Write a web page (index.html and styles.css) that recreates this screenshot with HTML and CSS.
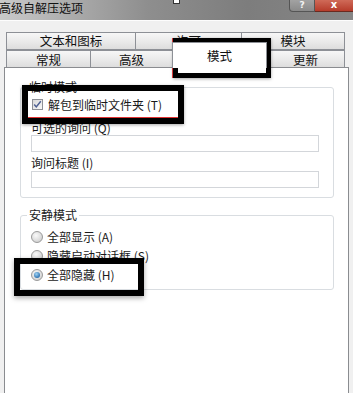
FILE: index.html
```html
<!DOCTYPE html>
<html lang="zh-CN">
<head>
<meta charset="utf-8">
<title>高级自解压选项</title>
<link rel="stylesheet" href="styles.css">
</head>
<body>
<div class="titlebar">
  <span class="title">高级自解压选项</span>
  <div class="capbtns">
    <span class="help">?</span>
    <span class="close">x</span>
  </div>
</div>
<div class="tabs">
  <div class="tabrow row1">
    <span class="tab w130">文本和图标</span>
    <span class="tab w106">许可</span>
    <span class="tab w103">模块</span>
  </div>
  <div class="tabrow row2">
    <span class="tab w85">常规</span>
    <span class="tab w82">高级</span>
    <span class="tab sel">模式</span>
    <span class="tab w78">更新</span>
  </div>
</div>
<div class="panel">
  <fieldset class="group g1">
    <legend>临时模式</legend>
    <label class="check-row"><span class="chk"><svg viewBox="0 0 11 11" width="9" height="9"><path d="M1.5 5.5 L4 8.5 L9.5 1.5" fill="none" stroke="#4d5f92" stroke-width="1.8"/></svg></span>解包到临时文件夹 (T)</label>
    <div class="lbl lbl-q">可选的询问 (Q)</div>
    <div class="field"></div>
    <div class="lbl lbl-i">询问标题 (I)</div>
    <div class="field field2"></div>
  </fieldset>
  <fieldset class="group g2">
    <legend>安静模式</legend>
    <div class="radio-row"><span class="radio"></span>全部显示 (A)</div>
    <div class="radio-row"><span class="radio"></span>隐藏启动对话框 (S)</div>
    <div class="radio-row"><span class="radio on"></span>全部隐藏 (H)</div>
  </fieldset>
</div>
<span class="speck"></span>
<span class="mark m1"></span>
<span class="mark m2"></span>
<span class="mark m3"></span>
</body>
</html>
```
FILE: styles.css
```css
* { box-sizing: border-box; }
html, body { margin: 0; padding: 0; }
body {
  width: 353px;
  height: 393px;
  overflow: hidden;
  position: relative;
  background: #f0f0f0;
  font-family: "Noto Sans CJK SC", "Noto Sans", sans-serif;
  font-size: 12px;
  color: #1a1a1a;
}
.titlebar {
  height: 21px;
  display: flex;
  align-items: flex-start;
  border-bottom: 1px solid #fdfdfd;
  background: linear-gradient(to right, #cacaca 0, #a9a9a9 22%, #8e8e8e 42%, #7d7d7d 70%, #868686 100%);
}
.title {
  margin-left: -1px;
  line-height: 16px;
  color: #111;
}
.capbtns { margin-left: auto; display: flex; }
.help {
  width: 26px;
  height: 12px;
  border: 1px solid #555;
  border-top: none;
  border-radius: 0 0 0 4px;
  background: linear-gradient(#a2a2a2, #8a8a8a);
  color: #f4f4f4;
  text-align: center;
  font-family: "DejaVu Sans", sans-serif;
  font-weight: bold;
  font-size: 9px;
  line-height: 10px;
}
.close {
  width: 38px;
  height: 12px;
  border-bottom: 1px solid #6a2a20;
  background: linear-gradient(#cf6a58, #b63c2b);
  color: #fff;
  text-align: center;
  font-family: "DejaVu Sans", sans-serif;
  font-weight: bold;
  font-size: 10px;
  line-height: 10px;
}
.tabs { padding: 11px 0 0 6px; }
.tabrow { display: flex; }
.row1 { height: 18px; }
.row2 { height: 17px; }
.tab {
  border: 1px solid #8d9096;
  border-left: none;
  background: linear-gradient(#f7f7f7, #ebebeb 50%, #dddddd);
  text-align: center;
  font-size: 12.5px;
  line-height: 15px;
  color: #111;
}
.row2 .tab { border-bottom: none; line-height: 18px; }
.tab:first-child { border-left: 1px solid #8d9096; }
.w130 { width: 130px; }
.w106 { width: 106px; }
.w103 { width: 103px; }
.w85 { width: 85px; }
.w82 { width: 82px; }
.w78 { width: 78px; }
.row2 .tab.sel {
  width: 95px;
  height: 26px;
  margin-top: -8px;
  margin-left: -1px;
  border-left: 1px solid #8d9096;
  background: #fff;
  position: relative;
  z-index: 1;
  padding-top: 5px;
  line-height: 15px;
}
.panel {
  margin-left: 4px;
  width: 345px;
  height: 330px;
  background: #fff;
  border: 1px solid #8a8c90;
  padding: 0 14px 0 15px;
}
.group {
  margin: 12px 0 0;
  padding: 2px 14px 9px 10px;
  border: 1px solid #d9dde1;
  border-radius: 3px;
  min-width: 0;
}
.g2 { margin-top: 10px; padding: 5px 14px 5px 10px; }
.group legend {
  padding: 0 2px;
  margin-left: -4px;
  line-height: 14px;
}
.check-row {
  display: flex;
  align-items: center;
  height: 16px;
}
.chk {
  width: 11px;
  height: 11px;
  margin: 0 5px 0 1px;
  border: 1px solid #8e9096;
  background: linear-gradient(135deg, #d8d8d8, #f8f8f8);
  display: flex;
  align-items: center;
  justify-content: center;
}
.lbl { line-height: 14px; }
.lbl-q { margin-top: 9px; }
.lbl-i { margin-top: 4px; }
.field {
  height: 17px;
  border: 1px solid #d3d6da;
  background: #fff;
}
.field2 { margin-top: 1px; }
.radio-row {
  display: flex;
  align-items: center;
  height: 19px;
}
.radio {
  width: 12px;
  height: 12px;
  margin: 0 4px 0 0;
  border-radius: 50%;
  border: 1px solid #9a9a9a;
  background: radial-gradient(circle at 40% 35%, #fafafa, #d6d6d6 70%, #c8c8c8);
  display: flex;
  align-items: center;
  justify-content: center;
}
.radio.on::after {
  content: "";
  width: 6px;
  height: 6px;
  border-radius: 50%;
  background: radial-gradient(circle at 40% 35%, #9fd3f3, #2a6eae 75%);
}
.speck {
  position: absolute;
  left: 173px;
  top: 0;
  width: 7px;
  height: 4px;
  background: #fff;
  border: 1px solid #333;
  border-top: none;
}
.mark {
  position: absolute;
  border: 6px solid #000;
  box-shadow: 0 1px 3px rgba(0, 0, 0, 0.35);
}
.m1 {
  left: 173px;
  top: 38px;
  width: 98px;
  height: 40px;
  border-width: 5px;
  box-shadow: -1px 0 0 #d43a3a, 0 1px 3px rgba(0, 0, 0, 0.35);
}
.m2 {
  left: 22px;
  top: 85px;
  width: 162px;
  height: 39px;
  box-shadow: inset 0 -1px 0 #e03232, 0 1px 3px rgba(0, 0, 0, 0.35);
}
.m3 {
  left: 14px;
  top: 258px;
  width: 130px;
  height: 38px;
  box-shadow: 0 2px 5px rgba(0, 0, 0, 0.35);
}
```
